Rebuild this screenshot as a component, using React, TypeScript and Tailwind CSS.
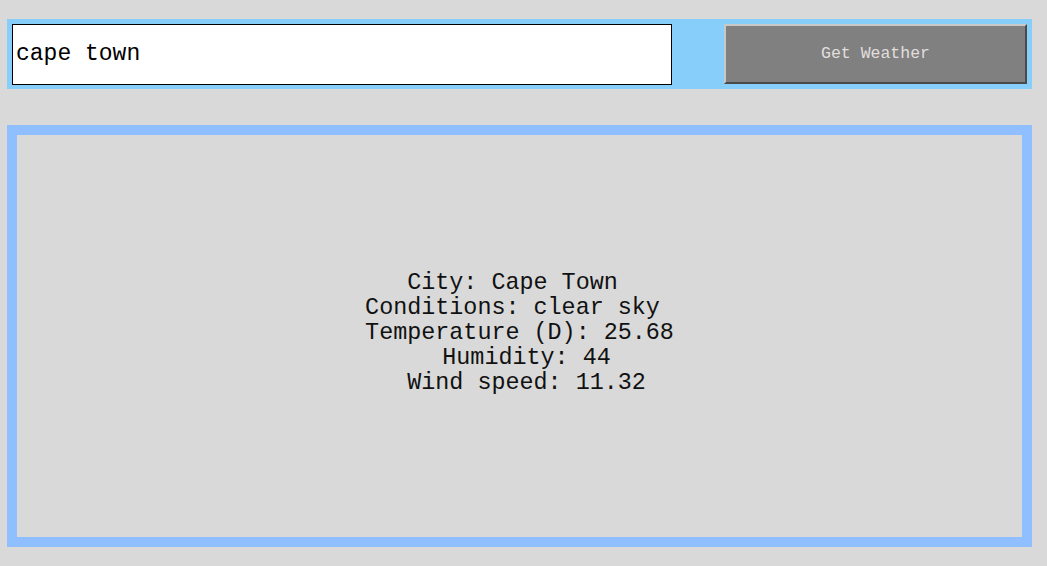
import React, { useState } from 'react';

export default function App() {
  const [city, setCity] = useState('cape town');

  // lines keep the stray spaces of the original output, they shift the centring
  const lines = [
    'City: Cape Town ',
    'Conditions: clear sky ',
    'Temperature (D): 25.68',
    ' Humidity: 44',
    ' Wind speed: 11.32',
  ];

  return (
    <div className="min-h-[566px] w-full bg-[#d9d9d9] pt-[19px] font-['Liberation_Mono',_'Courier_New',_monospace]">
      {/* search bar */}
      <div className="ml-[7px] flex h-[70px] w-[1025px] items-center justify-between bg-[#87cefa] px-[5px]">
        <input
          autoFocus
          value={city}
          onChange={e => setCity(e.target.value)}
          className="h-[61px] w-[660px] border border-black bg-white px-[3px] text-[23px] text-black caret-black outline-none"
        />
        <button className="h-[60px] w-[303px] border-2 border-t-[#c8c8c8] border-l-[#c8c8c8] border-b-[#4a4a4a] border-r-[#4a4a4a] bg-[#808080] text-[16.5px] text-[#e2dede]">
          Get Weather
        </button>
      </div>

      {/* result panel */}
      <div className="mt-[36px] ml-[7px] flex h-[422px] w-[1025px] flex-col items-center justify-center border-[10px] border-[#8fbfff] pb-[6px] text-center text-[23.4px] leading-[25px] text-[#111]">
        {lines.map(l => (
          <div key={l} className="whitespace-pre">{l}</div>
        ))}
      </div>
    </div>
  );
}
